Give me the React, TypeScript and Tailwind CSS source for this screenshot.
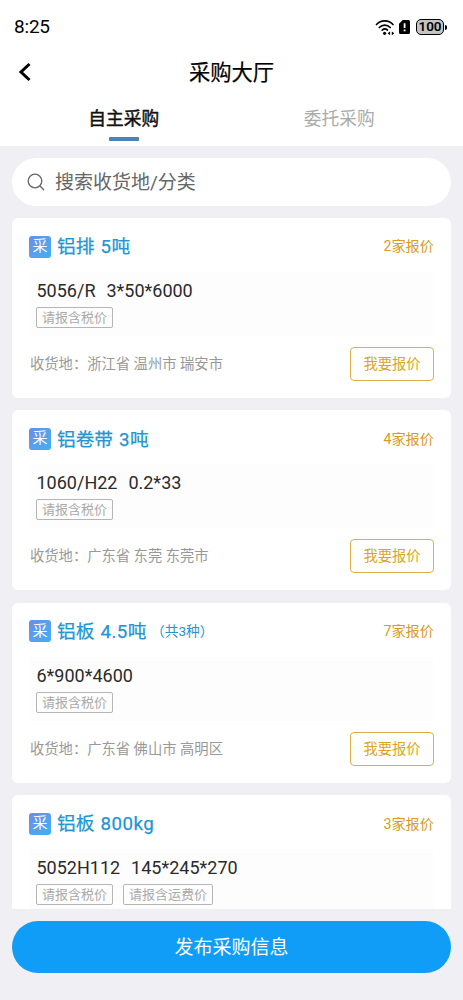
type Inquiry = {
  name: string;
  amount: string;
  extra?: string;
  quotes: number;
  spec: string;
  tags: string[];
  place: string;
};

const INQUIRIES: Inquiry[] = [
  { name: "铝排", amount: "5吨", quotes: 2, spec: "5056/R  3*50*6000", tags: ["请报含税价"], place: "浙江省 温州市 瑞安市" },
  { name: "铝卷带", amount: "3吨", quotes: 4, spec: "1060/H22  0.2*33", tags: ["请报含税价"], place: "广东省 东莞 东莞市" },
  { name: "铝板", amount: "4.5吨", extra: "（共3种）", quotes: 7, spec: "6*900*4600", tags: ["请报含税价"], place: "广东省 佛山市 高明区" },
  { name: "铝板", amount: "800kg", quotes: 3, spec: "5052H112  145*245*270", tags: ["请报含税价", "请报含运费价"], place: "" },
];

function StatusBar() {
  return (
    <div className="flex h-[52px] items-center justify-between pt-0.5 pr-4 pl-[14px]">
      <span className="pb-[2px] text-[19px] leading-none tracking-[-0.2px] text-black">8:25</span>
      <div className="flex items-center">
        <svg width="20" height="17" viewBox="0 0 20 17" fill="none" stroke="#000" strokeWidth="1.7" strokeLinecap="round">
          <path d="M1.5 5.500C6 .7 13.500.7 18 5.500" />
          <path d="M4.300 8.500c3-3.200 7.900-3.200 10.900 0" />
          <path d="M7.200 11.200c1.500-1.400 3.700-1.400 5.200-.2" />
          <circle cx="9.600" cy="14.300" r="1.600" fill="#000" stroke="none" />
          <path d="M12.600 14.300l2.500-1.900v3.800zM19.300 14.300l-2.500-1.900v3.800z" fill="#000" stroke="none" />
        </svg>
        <svg width="11" height="14" viewBox="0 0 11 14" className="ml-[4px]">
          <path d="M3.700 0H9.500A1.500 1.500 0 0 1 11 1.500v11A1.500 1.500 0 0 1 9.500 14h-8A1.500 1.500 0 0 1 0 12.500V3.700z" fill="#000" />
          <path d="M4.700 3.200h1.800v4.800H4.700zM4.700 9.400h1.800v1.800H4.700z" fill="#fff" />
        </svg>
        <div className="ml-[6px] flex h-[16px] w-[28px] items-center justify-center rounded-[5px] border border-black bg-[#c4c4c4] text-[13.500px] leading-none font-semibold text-black">
          100
        </div>
        <div className="ml-px h-[5px] w-[2px] rounded-r-sm bg-black" />
      </div>
    </div>
  );
}

function Header() {
  return (
    <header className="h-[146px] shrink-0 bg-white">
      <StatusBar />
      <div className="grid h-10 grid-cols-[60px_1fr_60px] items-center">
        <svg width="14" height="20" viewBox="0 0 14 20" fill="none" stroke="#000" strokeWidth="3" className="ml-[18px]">
          <path d="M11.500 2L3 10l8.500 8" />
        </svg>
        <h1 className="pt-[2px] text-center text-[21.300px] leading-none text-black [-webkit-text-stroke:0.2px_#000]">采购大厅</h1>
      </div>
      <nav className="flex px-4">
        <div className="flex flex-1 flex-col items-center pt-[18px]">
          <span className="text-[17.700px] leading-[19px] text-[#111] [-webkit-text-stroke:0.45px_#111]">自主采购</span>
          <span className="mt-[8px] h-1 w-[30px] rounded-[1px] bg-[#4684bd]" />
        </div>
        <div className="flex flex-1 flex-col items-center pt-[18px]">
          <span className="text-[17.700px] leading-[19px] text-[#aaa]">委托采购</span>
        </div>
      </nav>
    </header>
  );
}

function InquiryCard({ name, amount, extra, quotes, spec, tags, place }: Inquiry) {
  return (
    <article className="h-[180px] shrink-0 rounded-md bg-white px-[17px] pt-[17px]">
      <div className="flex h-[23px] items-center">
        <span className="flex size-[22px] items-center justify-center rounded-[3px] bg-linear-to-br from-[#6b8ce8] to-[#38b2f0] text-[15px] leading-none text-white">
          采
        </span>
        <h2 className="ml-[6px] flex gap-[6px] pt-[2px] text-[18.700px] leading-none text-[#2196d0] [-webkit-text-stroke:0.25px_#2196d0]">
          <span>{name}</span>
          <span className="tracking-[0.5px]">{amount}</span>
        </h2>
        {extra && <span className="ml-[4px] pt-[2px] text-[13.700px] leading-none text-[#2196d0]">{extra}</span>}
        <span className="ml-auto text-[14.200px] leading-none text-[#d99a22]">{quotes}家报价</span>
      </div>
      <div className="mt-[14px] mr-px ml-px h-[64px] bg-[#fdfdfd] px-[6px] pt-[9px]">
        <p className="pl-[0.500px] text-[18px] leading-[20px] [word-spacing:1px] whitespace-pre text-[#2b2b2b]">{spec}</p>
        <div className="mt-[6px] flex gap-[10px]">
          {tags.map((tag) => (
            <span key={tag} className="flex h-[21px] items-center rounded-[2px] border border-[#b5b5b5] px-[5px] text-[13px] leading-none text-[#aaa]">
              {tag}
            </span>
          ))}
        </div>
      </div>
      {place && (
        <div className="mt-[11px] flex h-[34px] items-center justify-between">
          <p className="ml-px text-[14.300px] leading-none text-[#999]">收货地：{place}</p>
          <button className="h-[34px] w-[84px] rounded-[4px] border border-[#dcb044] text-[14.300px] leading-none text-[#dba520]">
            我要报价
          </button>
        </div>
      )}
    </article>
  );
}

export default function App() {
  return (
    <div className="flex h-[1000px] w-[463px] flex-col overflow-hidden bg-[#efeff4] font-[Roboto,'Noto_Sans_CJK_SC',sans-serif]">
      <Header />
      <div className="mx-[12px] mt-[12px] flex h-[48px] shrink-0 items-center rounded-full bg-white pl-[15px]">
        <svg width="18" height="18" viewBox="0 0 18 18" fill="none" stroke="#666" strokeWidth="1.300" strokeLinecap="round">
          <circle cx="8" cy="8" r="6.800" />
          <path d="M13 13l3.700 3.700" />
        </svg>
        <span className="ml-[10px] text-[19px] leading-none text-[#666]">搜索收货地/分类</span>
      </div>
      <main className="mx-[12px] mt-[12px] flex h-[691px] shrink-0 flex-col gap-[12.400px] overflow-hidden">
        {INQUIRIES.map((item) => (
          <InquiryCard key={item.spec} {...item} />
        ))}
      </main>
      <button className="mx-[12px] mt-[12px] h-[52px] shrink-0 rounded-full bg-[#109df8] text-[19px] leading-none text-white">
        发布采购信息
      </button>
    </div>
  );
}
